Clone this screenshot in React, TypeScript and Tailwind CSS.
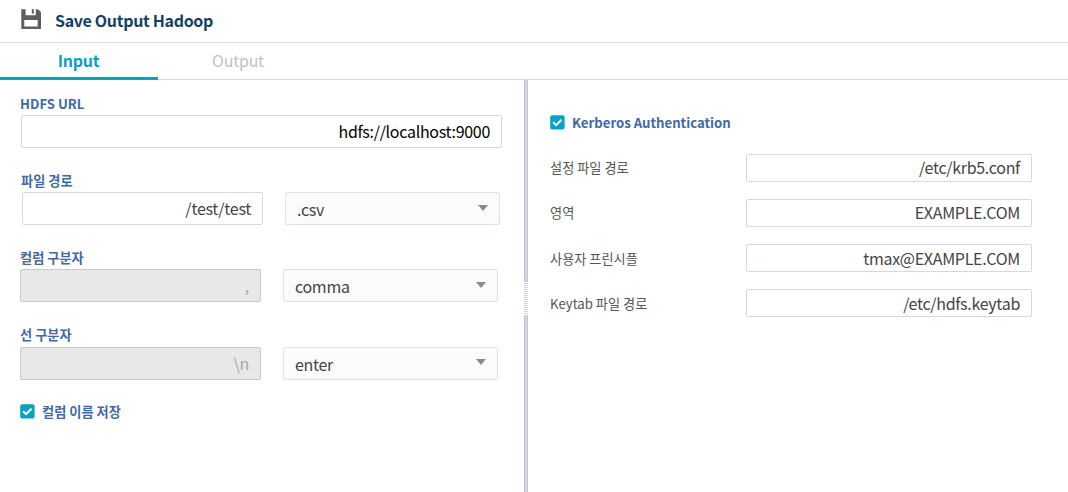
import type { ReactNode } from "react";

function Label({ children }: { children: ReactNode }) {
  return <div className="h-5 whitespace-pre text-[13.2px] leading-5 font-bold text-[#4169a4]">{children}</div>;
}

function Field({ value, className }: { value: string; className: string }) {
  return (
    <div className={`flex shrink-0 items-center justify-end rounded-[2px] border pr-[11px] text-base leading-6 tracking-[-0.3px] ${className}`}>
      {value}
    </div>
  );
}

function Select({ value, arrow = "mb-[2px]" }: { value: string; arrow?: string }) {
  return (
    <div className="flex h-[33px] w-[215px] shrink-0 items-center justify-between rounded-[2px] border border-[#dbe2ec] bg-[#fbfbfb] pr-[11px] pl-[11px] text-base leading-6 tracking-[-0.3px] text-[#444]">
      <span>{value}</span>
      <svg width="10" height="6" viewBox="0 0 10 6" className={arrow}>
        <path d="M0 0h10L5 6z" fill="#858d94" />
      </svg>
    </div>
  );
}

function Check() {
  return (
    <svg width="15" height="15" viewBox="0 0 15 15" className="mb-px shrink-0">
      <rect x="0.2" y="0.2" width="14.4" height="14.4" rx="2" fill="#06a2c4" />
      <path d="M3.2 7.3l2.9 2.9 5.4-5.4" fill="none" stroke="#fff" strokeWidth="2" />
    </svg>
  );
}

const settings = [
  { label: "설정 파일 경로", value: "/etc/krb5.conf", pad: "pb-[2px]" },
  { label: "영역", value: "EXAMPLE.COM", pad: "pb-[2px]" },
  { label: "사용자 프린시플", value: "tmax@EXAMPLE.COM", pad: "" },
  { label: "Keytab 파일 경로", value: "/etc/hdfs.keytab", pad: "" },
];

export default function App() {
  return (
    <div className="flex h-[492px] w-[1068px] flex-col overflow-hidden bg-white font-['Noto_Sans_CJK_KR',sans-serif]">
      <header className="flex h-[43px] shrink-0 items-center border-b border-[#d3dadc] pl-[21px]">
        <svg width="20" height="20" viewBox="0 0 20 20" className="mb-[4px]">
          <path
            fillRule="evenodd"
            fill="#5c5e61"
            d="M0.3 0.2H4.6V6.3H14.8V0.2H17L20 3V20H0.3ZM3.3 11V17.5H16.7V11Z"
          />
          <path d="M10.8 0.2H12.8V4.6H10.8Z" fill="#5c5e61" />
        </svg>
        <h1 className="mb-[2px] ml-[14px] text-base leading-6 font-bold tracking-[-0.32px] text-[#153f66]">Save Output Hadoop</h1>
      </header>
      <nav className="flex h-[37px] shrink-0 text-base leading-6 tracking-[-0.25px]">
        <div className="flex w-[158px] justify-center border-b-[3px] border-[#06a2c4] pt-[5px] pr-px font-bold text-[#06a2c4]">Input</div>
        <div className="flex w-[160px] justify-center border-b border-[#d3dadc] pt-[5px] text-[#c2c2c2]">Output</div>
        <div className="flex-1 border-b border-[#d3dadc]" />
      </nav>
      <main className="flex min-h-0 flex-1">
        <section className="flex w-[524px] shrink-0 flex-col pt-[14px] pl-5">
          <Label>HDFS URL</Label>
          <Field value="hdfs://localhost:9000" className="mt-px ml-px h-[33px] w-[481px] border-[#d3dadc] pb-[2px] text-black" />
          <div className="mt-[23px] ml-px">
            <Label>파일 경로</Label>
          </div>
          <div className="mt-px ml-[2px] flex gap-[22px]">
            <Field value="/test/test" className="h-[33px] w-[241px] border-[#d3dadf] pb-[2px] text-[#444]" />
            <Select value=".csv" />
          </div>
          <div className="mt-[23px]">
            <Label>컬럼 구분자</Label>
          </div>
          <div className="mt-px flex gap-[22px]">
            <Field value="," className="h-[33px] w-[241px] border-[#c8c8c8] bg-[#e8e8e8] pb-[2px] text-[#aaa]" />
            <Select value="comma" />
          </div>
          <div className="mt-[23px]">
            <Label>선 구분자</Label>
          </div>
          <div className="mt-[2px] flex gap-[22px]">
            <Field value="\n" className="h-[33px] w-[241px] border-[#c8c8c8] bg-[#e8e8e8] pb-[2px] text-[#aaa]" />
            <Select value="enter" arrow="mb-1" />
          </div>
          <div className="mt-[22px] flex items-center gap-[7px]">
            <Check />
            <Label>컬럼 이름 저장</Label>
          </div>
        </section>
        <div className="flex w-1 shrink-0 flex-col border-x border-[#b9c4d0] border-r-[#c0c6d2] bg-[#d1d7dd]">
          <div className="-mx-px mt-[202px] h-[34px] bg-[repeating-linear-gradient(to_bottom,#fff_0px,#fff_1px,#d1d7dd_1px,#d1d7dd_2px)]" />
        </div>
        <section className="flex flex-1 flex-col pt-[33px] pl-[22px]">
          <div className="flex items-center gap-[7px]">
            <Check />
            <Label>Kerberos Authentication</Label>
          </div>
          <div className="mt-[21px] flex flex-col gap-[17px]">
            {settings.map((s) => (
              <div key={s.label} className="flex h-7 items-center">
                <span className={`w-[196px] pt-[2px] text-[13.2px] leading-5 text-[#555] ${s.pad}`}>{s.label}</span>
                <Field value={s.value} className={`h-7 w-[286px] border-[#d3dadf] text-[#444] ${s.pad}`} />
              </div>
            ))}
          </div>
        </section>
      </main>
    </div>
  );
}
